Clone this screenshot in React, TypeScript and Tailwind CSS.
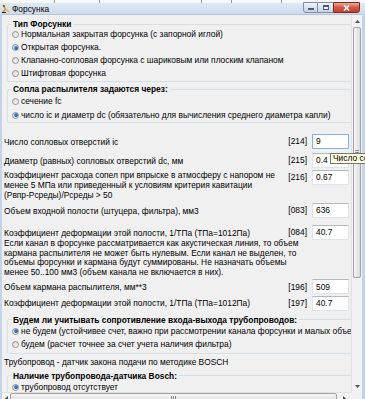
import React from "react";

type RadioProps = { label: string; checked?: boolean; h?: string };

function Radio({ label, checked, h = "h-[13px]" }: RadioProps) {
  return (
    <div className={`flex items-center ${h} pl-[4px] whitespace-nowrap`}>
      <span className="w-[7px] h-[7px] shrink-0 rounded-full border border-[#8f9294] bg-gradient-to-br from-[#d4d6d8] to-[#fbfbfb] flex items-center justify-center">
        {checked && <span className="w-[4px] h-[4px] rounded-full bg-gradient-to-br from-[#5c9ee8] to-[#0f4fa0]" />}
      </span>
      <span className="ml-[2px]">{label}</span>
    </div>
  );
}

function Group({ title, className, children }: { title: string; className?: string; children: React.ReactNode }) {
  return (
    <fieldset className={`ml-[3px] w-[345px] min-w-0 border border-[#d5dfe5] rounded-[2px] overflow-hidden ${className ?? ""}`}>
      <legend className="ml-[3px] px-[2px] font-bold leading-[10px]">{title}</legend>
      {children}
    </fieldset>
  );
}

type RowProps = { text: React.ReactNode; code: string; value: string; focused?: boolean; top?: boolean; className?: string };

function Row({ text, code, value, focused, top, className }: RowProps) {
  return (
    <div className={`flex w-[345px] ${top ? "items-start" : "items-center"} ${className ?? ""}`}>
      <div className="flex-1 leading-[10px] whitespace-nowrap">{text}</div>
      <div className="w-[24px] h-[15px] flex items-center justify-end">[{code}]</div>
      <div
        className={`ml-[5px] w-[37px] h-[15px] bg-white border flex items-center pl-[3px] ${
          focused ? "border-[#7eb4ea]" : "border-[#dfe3e8] border-t-[#b5b8bf]"
        }`}
      >
        {value}
      </div>
    </div>
  );
}

function Arrow({ dir }: { dir: "up" | "down" | "left" | "right" }) {
  const pts = {
    up: "1,4 3.5,1 6,4",
    down: "1,1 3.5,4 6,1",
    left: "4,1 1,3.5 4,6",
    right: "1,1 4,3.5 1,6",
  }[dir];
  const vb = dir === "up" || dir === "down" ? "0 0 7 5" : "0 0 5 7";
  const size = dir === "up" || dir === "down" ? "w-[7px] h-[5px]" : "w-[5px] h-[7px]";
  return (
    <svg viewBox={vb} className={size}>
      <polygon points={pts} fill="#505050" />
    </svg>
  );
}

export default function App() {
  return (
    <div className="relative w-[365px] h-[399px] overflow-hidden bg-[#c9d8ea] text-[8.4px] text-black font-['Liberation_Sans',Arial,sans-serif]">
      {/* title bar */}
      <div className="h-[14px] flex flex-col">
        <div className="h-[3px] flex bg-[#f7f7f7]">
          <div className="w-[55px] border-r border-[#9a9a9a]" />
          <div className="w-[45px] border-r border-[#9a9a9a]" />
          <div className="w-[102px] border-r border-[#9a9a9a]" />
          <div className="w-[30px] border-r border-[#9a9a9a]" />
          <div className="w-[50px] border-r border-[#9a9a9a]" />
          <div className="flex-1" />
        </div>
        <div className="h-[11px] flex items-center bg-gradient-to-b from-[#dfe9f5] to-[#cddbec] pl-[1px]">
          <svg viewBox="0 0 9 9" className="w-[9px] h-[9px]">
            <path d="M2 1 L4.5 5 L2 8" stroke="#e58a1c" strokeWidth="1.4" fill="none" />
            <path d="M4.5 5 L8 8" stroke="#f2b233" strokeWidth="1.4" fill="none" />
            <path d="M1 8.5 H5" stroke="#1a1a1a" strokeWidth="1" />
            <path d="M3 1 L3 3" stroke="#1a1a1a" strokeWidth="1" />
          </svg>
          <span className="ml-[2px] leading-[10px]">Форсунка</span>
        </div>
      </div>

      {/* caption buttons */}
      <div className="absolute top-[2px] right-[5px] flex h-[11px]">
        <div className="w-[15px] h-full border border-[#7d8fa8] rounded-bl-[3px] bg-gradient-to-b from-[#eef3f9] to-[#c4d3e6] flex items-end justify-center pb-[2px]">
          <span className="w-[6px] h-[2px] bg-white border border-[#4d5b6c]" />
        </div>
        <div className="w-[15px] h-full border-y border-[#7d8fa8] bg-gradient-to-b from-[#eef3f9] to-[#c4d3e6] flex items-center justify-center">
          <span className="w-[6px] h-[5px] border border-[#4d5b6c] border-t-2 bg-white/60" />
        </div>
        <div className="w-[27px] h-full border border-[#7a2a1e] rounded-br-[3px] bg-gradient-to-b from-[#e9a99b] via-[#cf5a44] to-[#c2412b] flex items-center justify-center">
          <svg viewBox="0 0 7 6" className="w-[7px] h-[6px]">
            <path d="M1 0.5 L6 5.5 M6 0.5 L1 5.5" stroke="#ffffff" strokeWidth="1.6" />
          </svg>
        </div>
      </div>

      <div className="flex h-[385px]">
        <div className="w-[2px] bg-[#c3d4e8]" />
        <div className="w-[360px] flex flex-col border-t border-[#b6c6d8]">
          <div className="flex h-[377px]">
            {/* scrolled content */}
            <div className="w-[349px] overflow-hidden bg-[#f0f0f0] pl-[2px]">
              <Group title="Тип Форсунки" className="mt-[4px] pb-[1px]">
                <div className="-mt-[1px]">
                  <Radio label="Нормальная закрытая форсунка (с запорной иглой)" />
                  <Radio label="Открытая форсунка." checked />
                  <Radio label="Клапанно-сопловая форсунка с шариковым или плоским клапаном" />
                  <Radio label="Штифтовая форсунка" />
                </div>
              </Group>

              <Group title="Сопла распылителя задаются через:" className="mt-[2px]">
                <Radio label="сечение fc" h="h-[14px]" />
                <Radio label="число ic и диаметр dc (обязательно для вычисления среднего диаметра капли)" checked h="h-[14px]" />
              </Group>

              <Row className="mt-[11px]" text="Число сопловых отверстий ic" code="214" value="9" focused />
              <Row className="mt-[4px]" text="Диаметр (равных) сопловых отверстий dc, мм" code="215" value="0.4" />
              <Row
                className="mt-[2px]"
                top
                text={
                  <>
                    Коэффициент расхода сопел при впрыске в атмосферу с напором не
                    <br />
                    менее 5 МПа или приведенный к условиям критерия кавитации
                    <br />
                    (Рвпр-Рсреды)/Рсреды &gt; 50
                  </>
                }
                code="216"
                value="0.67"
              />
              <Row className="mt-[3px]" text="Объем входной полости (штуцера, фильтра), мм3" code="083" value="636" />
              <Row className="mt-[7px]" text="Коэффициент деформации этой полости, 1/ТПа (ТПа=1012Па)" code="084" value="40.7" />

              <p className="-mt-[1px] leading-[9.6px] whitespace-nowrap">
                Если канал в форсунке рассматривается как акустическая линия, то объем
                <br />
                кармана распылителя не может быть нулевым. Если канал не выделен, то
                <br />
                объемы форсунки и кармана будут суммированы. Не назначать объемы
                <br />
                менее 50..100 мм3 (объем канала не включается в них).
              </p>

              <Row className="mt-[2px]" text="Объем кармана распылителя, мм**3" code="196" value="509" />
              <Row className="mt-[1.5px]" text="Коэффициент деформации этой полости, 1/ТПа (ТПа=1012Па)" code="197" value="40.7" />

              <Group title="Будем ли учитывать сопротивление входа-выхода трубопроводов:" className="mt-[4px] pb-[2px]">
                <Radio label="не будем (устойчивее счет, важно при рассмотрении канала форсунки и малых объемов)" checked />
                <Radio label="будем (расчет точнее за счет учета наличия фильтра)" />
              </Group>

              <div className="mt-[3px] leading-[10px]">Трубопровод - датчик закона подачи по методике BOSCH</div>

              <Group title="Наличие трубопровода-датчика Bosch:" className="mt-[4px]">
                <Radio label="трубопровод отсутствует" checked />
              </Group>
            </div>

            {/* vertical scrollbar */}
            <div className="w-[11px] flex flex-col bg-[#f2f2f2] border-l border-[#e2e2e2]">
              <div className="h-[11px] flex items-center justify-center pt-[1px]">
                <Arrow dir="up" />
              </div>
              <div className="mt-[1px] mx-[1px] h-[251px] rounded-[2px] border border-[#a3a3a3] bg-gradient-to-r from-[#f6f6f6] to-[#dadada] flex flex-col items-center justify-center gap-[1px]">
                <span className="w-[4px] h-[1px] bg-[#8a8a8a]" />
                <span className="w-[4px] h-[1px] bg-[#8a8a8a]" />
                <span className="w-[4px] h-[1px] bg-[#8a8a8a]" />
              </div>
              <div className="flex-1" />
              <div className="h-[11px] flex items-center justify-center">
                <Arrow dir="down" />
              </div>
            </div>
          </div>

          {/* horizontal scrollbar */}
          <div className="flex h-[12px]">
            <div className="w-[349px] flex items-center bg-[#f2f2f2] border-t border-[#e2e2e2]">
              <div className="w-[8px] flex justify-center">
                <Arrow dir="left" />
              </div>
              <div className="w-[327px] h-[10px] rounded-[2px] border border-[#a3a3a3] bg-gradient-to-b from-[#f6f6f6] to-[#dadada] flex items-center justify-center gap-[1px]">
                <span className="w-[1px] h-[4px] bg-[#8a8a8a]" />
                <span className="w-[1px] h-[4px] bg-[#8a8a8a]" />
                <span className="w-[1px] h-[4px] bg-[#8a8a8a]" />
              </div>
              <div className="flex-1 flex justify-center">
                <Arrow dir="right" />
              </div>
            </div>
            <div className="w-[11px] bg-[#f0f0f0]" />
          </div>
        </div>
        <div className="w-[3px] bg-[#c3d4e8]" />
      </div>

      {/* tooltip */}
      <div className="absolute left-[330px] top-[153px] h-[11px] px-[2px] flex items-center whitespace-nowrap bg-[#ffffe1] border border-[#767676] leading-[9px]">
        Число сопловых отверстий
      </div>
    </div>
  );
}
